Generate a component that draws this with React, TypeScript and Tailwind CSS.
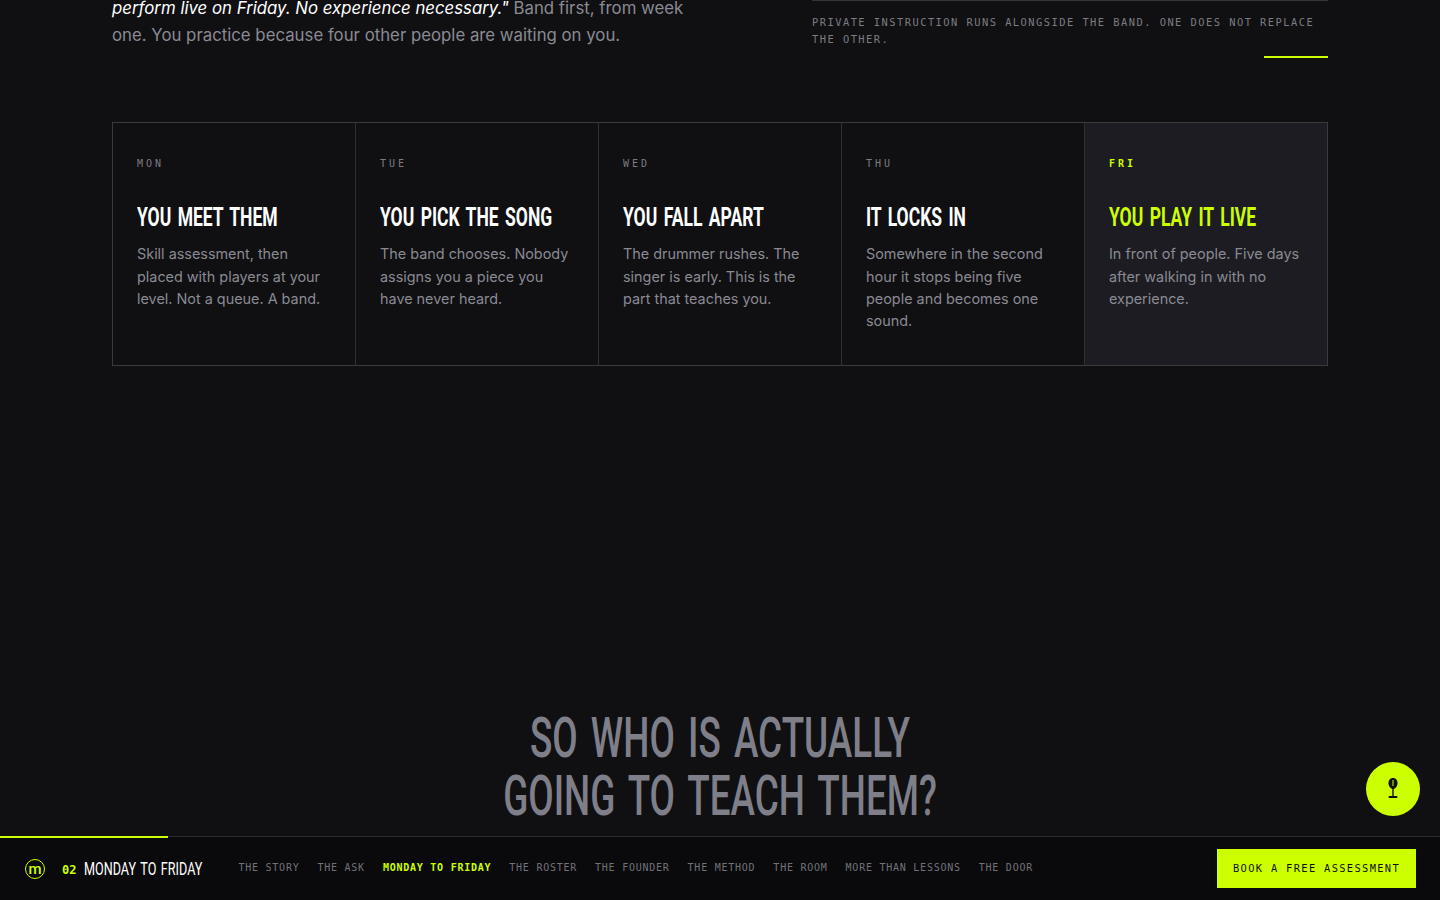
const days = [
  { day: "MON", title: "YOU MEET THEM", body: "Skill assessment, then placed with players at your level. Not a queue. A band." },
  { day: "TUE", title: "YOU PICK THE SONG", body: "The band chooses. Nobody assigns you a piece you have never heard." },
  { day: "WED", title: "YOU FALL APART", body: "The drummer rushes. The singer is early. This is the part that teaches you." },
  { day: "THU", title: "IT LOCKS IN", body: "Somewhere in the second hour it stops being five people and becomes one sound." },
];

const navItems = ["THE STORY", "THE ASK", "MONDAY TO FRIDAY", "THE ROSTER", "THE FOUNDER", "THE METHOD", "THE ROOM", "MORE THAN LESSONS", "THE DOOR"];

const mono = "font-['DejaVu_Sans_Mono',monospace]";
// Roboto squeezed sideways stands in for the condensed display face
const display = "font-['Roboto',sans-serif]";

export default function App() {
  return (
    <div className="h-screen overflow-hidden bg-[#101013] font-['Inter',sans-serif]">
      <section className="mx-auto w-[1216px] -mt-[5px]">
        <div className="grid grid-cols-[580px_516px] justify-between">
          <p className="text-[16.8px] leading-[27px] text-[#8a8a92]">
            <em className="text-white">perform live on Friday. No experience necessary."</em> Band first, from week one. You practice because four other people are waiting on you.
          </p>
          <div className="pt-[5px]">
            <div className="border-t border-[#34343a] pt-[13px]">
              <p className={`${mono} text-[10.4px] leading-[17px] tracking-[1.47px] text-[#7c7c82]`}>
                PRIVATE INSTRUCTION RUNS ALONGSIDE THE BAND. ONE DOES NOT REPLACE THE OTHER.
              </p>
              <div className="ml-auto mt-[8px] h-[2px] w-16 bg-[#ccff00]" />
            </div>
          </div>
        </div>

        <div className="mt-16 grid h-[244px] grid-cols-5 border-l border-t border-[#3a3a40]">
          {days.map((d) => (
            <div key={d.day} className="border-b border-r border-b-[#3a3a40] border-r-[#2e2e33] px-6 pt-[33px]">
              <div className={`${mono} text-[10px] leading-[15px] tracking-[0.3em] text-[#7c7c82]`}>{d.day}</div>
              <h3 className={`${display} mt-[32px] origin-left scale-x-[0.7] whitespace-nowrap text-[25px] leading-[30px] font-bold [word-spacing:3px] text-white`}>{d.title}</h3>
              <p className="mt-[10.2px] text-[14.4px] leading-[22.4px] text-[#8a8a92]">{d.body}</p>
            </div>
          ))}
          <div className="border-b border-r border-[#3a3a40] bg-[#1c1c22] px-6 pt-[33px]">
            <div className={`${mono} text-[10px] leading-[15px] font-bold tracking-[0.3em] text-[#ccff00]`}>FRI</div>
            <h3 className={`${display} mt-[32px] origin-left scale-x-[0.7] whitespace-nowrap text-[25px] leading-[30px] font-bold [word-spacing:3px] text-[#ccff00]`}>YOU PLAY IT LIVE</h3>
            <p className="mt-[10.2px] text-[14.4px] leading-[22.4px] text-[#8a8a92]">In front of people. Five days after walking in with no experience.</p>
          </div>
        </div>

        <h2 className={`${display} mt-[343px] scale-x-[0.67] text-center text-[55px] leading-[58px] font-medium [word-spacing:6px] text-[#7f7f8a]`}>
          SO WHO IS ACTUALLY
          <br />
          GOING TO TEACH THEM?
        </h2>
      </section>

      <button className="fixed bottom-[84px] right-[20px] flex h-[54px] w-[54px] items-center justify-center rounded-full bg-[#ccff00]">
        <svg width="18" height="24" viewBox="0 0 18 24">
          <path d="M9 1c2.800 0 4.500 2.200 4.500 5.200S11.200 12 9 12 4.500 9.200 4.500 6.200 6.200 1 9 1z" fill="#101013" />
          <rect x="8.500" y="3" width="1" height="6" fill="#ccff00" />
          <rect x="8.300" y="12" width="1.400" height="7" fill="#101013" />
          <rect x="4.500" y="19" width="9" height="2" rx="1" fill="#101013" />
        </svg>
      </button>

      <footer className="fixed inset-x-0 bottom-0 flex h-16 items-center border-t border-[#2a2a2f] bg-[#0a0a0c] px-6">
        <div className="absolute -top-px left-0 h-[2px] w-[168px] bg-[#ccff00]" />
        <svg width="22" height="22" viewBox="0 0 22 22" className="shrink-0">
          <circle cx="11" cy="11" r="9.500" fill="none" stroke="#ccff00" strokeWidth="1" />
          <text x="11" y="15.500" textAnchor="middle" fontSize="15" fontWeight="500" fill="#ccff00" fontFamily="Roboto, sans-serif">m</text>
        </svg>
        <span className={`${mono} ml-[16px] mt-[2px] text-[12px] font-bold text-[#ccff00]`}>02</span>
        <span className={`${display} ml-[8px] mt-[1px] w-[119px] shrink-0 origin-left scale-x-[0.675] whitespace-nowrap text-[18.700px] [word-spacing:2px] text-white`}>MONDAY TO FRIDAY</span>
        <nav className="mb-[2px] ml-[35px] flex gap-[18px]">
          {navItems.map((n) => (
            <span key={n} className={`${mono} text-[10px] tracking-[0.755px] ${n === "MONDAY TO FRIDAY" ? "font-bold text-[#ccff00]" : "text-[#72727a]"}`}>{n}</span>
          ))}
        </nav>
        <a className={`${mono} ml-auto flex h-[39px] w-[199px] items-center justify-center bg-[#ccff00] text-[10.4px] tracking-[1.34px] text-[#101013]`}>BOOK A FREE ASSESSMENT</a>
      </footer>
    </div>
  );
}
